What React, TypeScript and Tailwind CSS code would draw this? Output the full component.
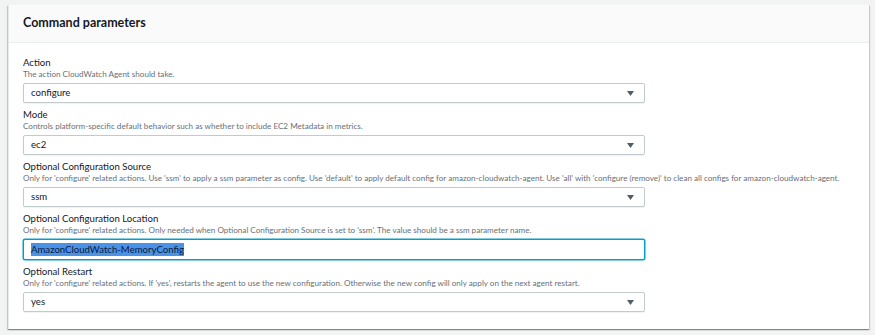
type Field = {
    label: string;
    hint: string;
    value: string;
    kind: "select" | "input";
};

const fields: Field[] = [
    { label: "Action", hint: "The action CloudWatch Agent should take.", value: "configure", kind: "select" },
    {
        label: "Mode",
        hint: "Controls platform-specific default behavior such as whether to include EC2 Metadata in metrics.",
        value: "ec2",
        kind: "select",
    },
    {
        label: "Optional Configuration Source",
        hint: "Only for 'configure' related actions. Use 'ssm' to apply a ssm parameter as config. Use 'default' to apply default config for amazon-cloudwatch-agent. Use 'all' with 'configure (remove)' to clean all configs for amazon-cloudwatch-agent.",
        value: "ssm",
        kind: "select",
    },
    {
        label: "Optional Configuration Location",
        hint: "Only for 'configure' related actions. Only needed when Optional Configuration Source is set to 'ssm'. The value should be a ssm parameter name.",
        value: "AmazonCloudWatch-MemoryConfig",
        kind: "input",
    },
    {
        label: "Optional Restart",
        hint: "Only for 'configure' related actions. If 'yes', restarts the agent to use the new configuration. Otherwise the new config will only apply on the next agent restart.",
        value: "yes",
        kind: "select",
    },
];

function Caret() {
    return (
        <svg width="7" height="5" viewBox="0 0 7 5" className="shrink-0">
            <path d="M0 0 H7 L3.5 5 Z" fill="#545b64" />
        </svg>
    );
}

function FieldRow({ field }: { field: Field }) {
    return (
        <div className="flex flex-col">
            <div className="text-[9.6px] leading-[12px] text-[#16191f]">{field.label}</div>
            <div className="text-[8.1px] leading-[11px] text-[#687078] whitespace-nowrap">{field.hint}</div>
            {field.kind === "select" ? (
                <div className="mt-[3px] w-[622px] h-[20px] flex items-center justify-between pl-[7px] pr-[10px] bg-white border border-[#c2cbcc] rounded-[2px] shadow-[0_1px_1px_rgba(0,28,36,0.06)]">
                    <span className="text-[9.6px] text-[#16191f]">{field.value}</span>
                    <Caret />
                </div>
            ) : (
                <div className="mt-[3px] w-[622px] h-[21px] flex items-center pl-[7px] bg-white border border-[#00a1c9] rounded-[2px] shadow-[0_0_0_0.5px_#00a1c9]">
                    <span className="text-[9.6px] leading-[13px] bg-[#4a92e6] text-[#0b1a3a]">{field.value}</span>
                </div>
            )}
        </div>
    );
}

export default function App() {
    return (
        <div className="w-[875px] h-[335px] bg-[#f2f3f3] pt-[5px] pl-[8px] pr-[6px] font-['Lato',sans-serif]">
            <div className="w-[861px] h-[324px] bg-white border-l border-[#e6e9e9] shadow-[0_1px_1px_0_rgba(0,28,36,0.3),1px_1px_1px_0_rgba(0,28,36,0.15),-1px_1px_1px_0_rgba(0,28,36,0.15)]">
                {/* header */}
                <div className="h-[38px] flex items-center px-[14px] bg-[#fafafa] border-b border-[#eaeded]">
                    <h2 className="text-[12.5px] font-bold text-[#16191f]">Command parameters</h2>
                </div>
                {/* parameters */}
                <div className="flex flex-col gap-[6px] pt-[14px] px-[14px]">
                    {fields.map((f) => (
                        <FieldRow key={f.label} field={f} />
                    ))}
                </div>
            </div>
        </div>
    );
}
